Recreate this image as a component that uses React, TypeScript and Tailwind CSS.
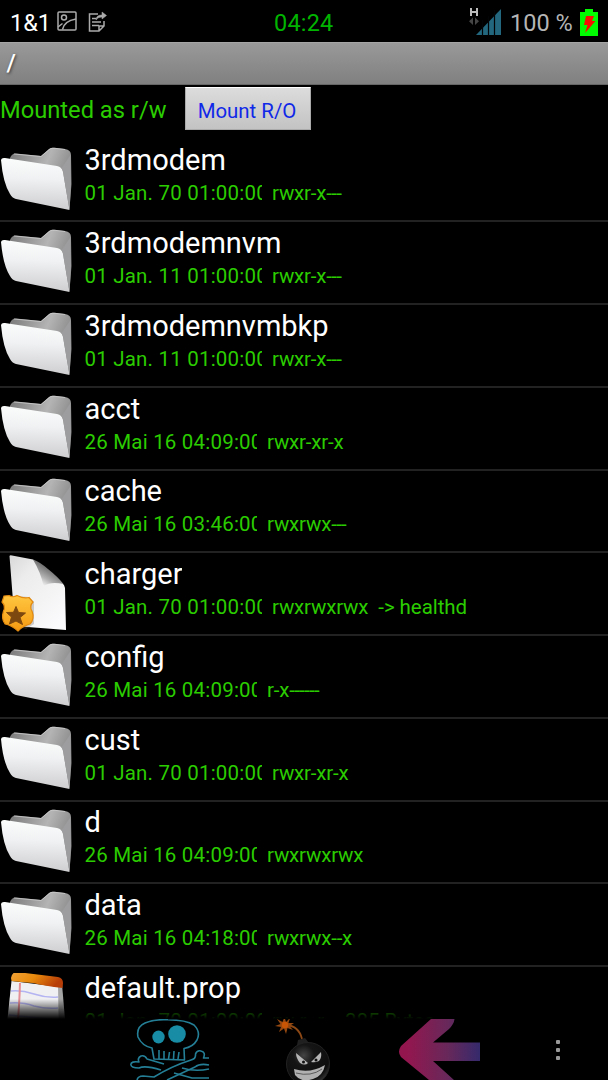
import type { ReactNode } from "react";

type Kind = "folder" | "link" | "text";

interface Entry {
  name: string;
  date: string;
  perms: string;
  kind: Kind;
  extra?: string;
}

const entries: Entry[] = [
  { name: "3rdmodem", date: "01 Jan. 70 01:00:00", perms: "rwxr-x---", kind: "folder" },
  { name: "3rdmodemnvm", date: "01 Jan. 11 01:00:00", perms: "rwxr-x---", kind: "folder" },
  { name: "3rdmodemnvmbkp", date: "01 Jan. 11 01:00:00", perms: "rwxr-x---", kind: "folder" },
  { name: "acct", date: "26 Mai 16 04:09:00", perms: "rwxr-xr-x", kind: "folder" },
  { name: "cache", date: "26 Mai 16 03:46:00", perms: "rwxrwx---", kind: "folder" },
  { name: "charger", date: "01 Jan. 70 01:00:00", perms: "rwxrwxrwx", kind: "link", extra: "-> healthd" },
  { name: "config", date: "26 Mai 16 04:09:00", perms: "r-x------", kind: "folder" },
  { name: "cust", date: "01 Jan. 70 01:00:00", perms: "rwxr-xr-x", kind: "folder" },
  { name: "d", date: "26 Mai 16 04:09:00", perms: "rwxrwxrwx", kind: "folder" },
  { name: "data", date: "26 Mai 16 04:18:00", perms: "rwxrwx--x", kind: "folder" },
  { name: "default.prop", date: "01 Jan. 70 01:00:00", perms: "rw-r--r--", kind: "text", extra: "385 Bytes" },
];

/* ---------- icons ---------- */

function FolderIcon() {
  return (
    <svg viewBox="0 0 74 74" className="h-[74px] w-[74px]">
      <defs>
        <linearGradient id="folderBack" x1="0" y1="0" x2="1" y2="0.4">
          <stop offset="0" stopColor="#777" />
          <stop offset="0.6" stopColor="#b4b4b4" />
          <stop offset="1" stopColor="#858585" />
        </linearGradient>
        <linearGradient id="folderFront" x1="0.5" y1="0" x2="0.45" y2="1">
          <stop offset="0" stopColor="#fbfcfc" />
          <stop offset="0.4" stopColor="#f0f1f2" />
          <stop offset="1" stopColor="#cdcdcf" />
        </linearGradient>
      </defs>
      <path d="M10 12Q12 7 16 7.500L41 10L49 3Q51 1.500 54 1.800L65 3Q71 4 71 9L71.500 38L69.500 63L60 55L10 20Z" fill="url(#folderBack)" />
      <path d="M14 8L41 10.500L50 3Q52 2 55 2.300L65 3.500" fill="none" stroke="#ccc" strokeWidth="0.800" />
      <path d="M1 14Q1.500 11.500 5 12L57 20Q62 21 63 26L69.500 64L16 53Q12 52 10 48Q3 37 1 14Z" fill="url(#folderFront)" />
      <path d="M61.500 22Q63.500 25 63.700 30L69.500 64L71 38L70.500 9" fill="#9d9d9f" />
    </svg>
  );
}

function LinkFileIcon() {
  return (
    <svg viewBox="0 0 74 80" className="h-20 w-[74px]">
      <defs>
        <linearGradient id="sheet" x1="0" y1="0" x2="0.8" y2="1">
          <stop offset="0" stopColor="#d8d8d8" />
          <stop offset="0.3" stopColor="#ececec" />
          <stop offset="1" stopColor="#fbfbfd" />
        </linearGradient>
        <linearGradient id="sheetFold" gradientUnits="userSpaceOnUse" x1="44" y1="33" x2="54" y2="17">
          <stop offset="0" stopColor="#f4f4f4" />
          <stop offset="0.4" stopColor="#b0b0b0" />
          <stop offset="1" stopColor="#666" />
        </linearGradient>
        <linearGradient id="badge" x1="0" y1="0" x2="0" y2="1">
          <stop offset="0" stopColor="#ffc640" />
          <stop offset="1" stopColor="#f59a12" />
        </linearGradient>
      </defs>
      <path d="M9.500 3Q10 2 12 2.500L33 6.500L62 30Q65 32 65 35L66 77L15 73Q12 35 9.500 3Z" fill="url(#sheet)" />
      <path d="M33 6.500Q41 20 43.500 33Q51 28 63.500 31Q58 24 48 16Q40 9 33 6.500Z" fill="url(#sheetFold)" />
      <path d="M14 43L29 44L34 49L34 71L26 76L15 73Z" fill="#6b6b6b" opacity="0.3" />
      <path
        d="M4 43L9 42.500Q13 45 17 42.500Q24 46 29 44.500L33 49Q29 53 32 58Q35 66 30 71Q23 73 18 78Q11 72 5 71Q1 66 3.500 58Q6 53 2 49Z"
        fill="url(#badge)"
        stroke="#e38a10"
        strokeWidth="1.200"
      />
      <path d="M16 53.500L18.500 59.500L25.500 60L20 64.500L22.500 71.500L16 68L9.500 71L11.500 64L6.500 59.500L13.500 59.300Z" fill="#7d480f" stroke="#7d480f" strokeLinejoin="round" />
    </svg>
  );
}

function TextFileIcon() {
  return (
    <svg viewBox="0 0 74 74" className="h-[74px] w-[74px]">
      <defs>
        <linearGradient id="padTop" x1="0" y1="0" x2="1" y2="0.3">
          <stop offset="0" stopColor="#f0a238" />
          <stop offset="0.5" stopColor="#e88a0c" />
          <stop offset="1" stopColor="#b83e08" />
        </linearGradient>
      </defs>
      <path d="M11.500 8L60 14L66 70L6 60Z" fill="#f0f0f2" />
      <path d="M58 12L62 11L67 70L59 70Z" fill="#a5a5a5" />
      <path d="M11 5Q12 -1 17 -1L58 4Q63 5 63 10L62.500 15Q45 13 33 10Q20 9 11.500 8Z" fill="url(#padTop)" />
      <path d="M11 18Q22 17 34 21Q46 25 58 24M10 30Q23 29 34 33Q46 36 58 35M9 42L59 47" fill="none" stroke="#b4b4f2" strokeWidth="1.600" />
      <path d="M20 10Q19.500 30 17 60" fill="none" stroke="#e58d94" strokeWidth="2" />
    </svg>
  );
}

const icons: Record<Kind, ReactNode> = {
  folder: <FolderIcon />,
  link: <LinkFileIcon />,
  text: <TextFileIcon />,
};

function SkullIcon() {
  return (
    <svg viewBox="0 0 80 61" className="h-[61px] w-20 shrink-0" fill="none" stroke="#247f96" strokeWidth="1.600" strokeLinejoin="round">
      <path d="M24 40L22 29Q12 27 8 18Q6 8 15 4Q25 0 38 0.800Q56 1 64 6Q71 13 67 21Q63 28 54 29.500L54.500 41Z" />
      <path d="M29 31V40M34 32V40M39.500 33L38.500 40M44 32L43.500 40M49 33L48 40" />
      <ellipse cx="28.500" cy="18" rx="6.200" ry="6.500" fill="#188ca4" stroke="none" />
      <circle cx="47" cy="15" r="8.800" fill="#188ca4" stroke="none" />
      {/* bone running down to the right */}
      <path d="M34 45L17 40Q15 36 11 37Q7 39 9 43Q1 42 0.800 45.500Q1 49 9 49Q15 46 31 51" />
      <path d="M52 49Q65 53 79 50M44 54L62 59H79" />
      {/* bone running up to the right */}
      <path d="M7 61Q8 57 13 57L24 58Q42 47 61 41Q66 40 65.500 35Q67 31 71 32Q76 33 73.500 39H79" />
      <path d="M79 46Q70 44 65 48L37 61" />
    </svg>
  );
}

function BombIcon() {
  return (
    <svg viewBox="0 0 60 61" className="h-[61px] w-[60px]">
      <defs>
        <radialGradient id="bombBody" cx="0.4" cy="0.3" r="0.7">
          <stop offset="0" stopColor="#444" />
          <stop offset="0.35" stopColor="#151515" />
          <stop offset="0.85" stopColor="#0e0e0e" />
          <stop offset="1" stopColor="#303030" />
        </radialGradient>
      </defs>
      <path d="M11 6Q24 7 27 20" fill="none" stroke="#8c4815" strokeWidth="1.800" />
      <path d="M9.500 -2L11 3L15 -1L13.500 4L19 4L14.500 7L18 11L12.500 9L11 15L9 9.500L4 13L6 8L0 7L5.500 5L2 0L7.500 3Z" fill="#95480f" />
      <circle cx="10" cy="6" r="3.200" fill="#c85506" />
      <path d="M22 26L23 21L30 19L34 24V30H23Z" fill="#202020" />
      <circle cx="33" cy="45" r="21.500" fill="url(#bombBody)" stroke="#222" />
      <path d="M21 34L33 44Q30 47 25 44Q21 39 21 34ZM46 33Q47 39 44 42Q40 44 36 43Z" fill="#b5b5b5" />
      <circle cx="28.500" cy="43" r="1.500" fill="#111" />
      <circle cx="41" cy="41" r="1.500" fill="#111" />
      <path d="M19 50Q35 55 50 46Q48 57 38 60Q26 64 20 56Z" fill="#b0b0b0" />
      <path d="M21 54Q36 58 47 50" fill="none" stroke="#444" strokeWidth="0.800" />
    </svg>
  );
}

function ArrowIcon() {
  return (
    <svg viewBox="0 0 82 61" className="h-[61px] w-[82px]">
      <defs>
        <linearGradient id="arrow" x1="0" y1="0.45" x2="1" y2="0.45">
          <stop offset="0.1" stopColor="#94164f" />
          <stop offset="0.25" stopColor="#861c52" />
          <stop offset="0.6" stopColor="#68285a" />
          <stop offset="1" stopColor="#352a6c" />
        </linearGradient>
      </defs>
      <path d="M33 0H56.500Q56 5 51 10L35 23.500H82V42H35L56 61H31L3 38Q-1 33 3 27Z" fill="url(#arrow)" />
    </svg>
  );
}

/* ---------- page parts ---------- */

function StatusBar() {
  return (
    <header className="grid h-[42px] shrink-0 grid-cols-[274px_195px_1fr] items-center text-[23.500px] leading-[42px]">
      <div className="flex items-center pl-[10px]">
        <span className="w-[47px] pt-[2px] whitespace-nowrap text-white">1&amp;1</span>
        <svg viewBox="0 0 20 20" className="h-5 w-5 -translate-y-px" fill="none" stroke="#aaa" strokeWidth="1.500">
          <rect x="1" y="1" width="18" height="18" rx="1" />
          <circle cx="7" cy="6.500" r="2.500" />
          <path d="M1 16L5.500 12.500M5.500 18.500Q7 10 19 8" />
        </svg>
        <svg viewBox="0 0 20 21" className="ml-[11px] h-[21px] w-5 -translate-y-px" fill="none" stroke="#aaa" strokeWidth="1.500">
          <path d="M10 3H1.500V20H11L16 15V10M11 20V15H16M4 11H13M4 14.500H11M4 7.500H8" />
          <path d="M8 9Q8 4 14 4V1L18.500 4.500L14 8V6Q10 6 8 9Z" fill="#aaa" strokeWidth="0.500" />
        </svg>
      </div>
      <span className="pt-[2px] tracking-[0.200px] text-[#00b400]">04:24</span>
      <div className="flex h-full items-center text-[#b5b5b5]">
        <svg viewBox="0 0 32 28" className="h-7 w-8">
          <path d="M2 0V8M8 0V8M2 4H8" stroke="#bbb" strokeWidth="2" />
          <path d="M4 9.500V17L0 13.200ZM6 9.500V17L10 13.200Z" fill="#454545" />
          <path d="M7 27L32 1V27Z" fill="#22677e" />
          <path d="M13.500 12V28M19.500 8V28M25.500 2V28" stroke="#020406" strokeWidth="1.200" />
        </svg>
        <span className="ml-[9px] w-[70px] pt-[2px] whitespace-nowrap">100 %</span>
        <svg viewBox="0 0 18 27" className="h-[27px] w-[18px]">
          <path d="M0 3H5V0H13V3H18V27H0Z" fill="#00fc00" />
          <path d="M6 7H14L12 12H15.500L5 24L7.500 16H4Z" fill="#f80d00" />
        </svg>
      </div>
    </header>
  );
}

// trailing dashes run together into one line
function Perms({ value }: { value: string }) {
  const body = value.replace(/-{3,}$/, "");

  return (
    <span className="ml-[10.500px] tracking-[-0.200px]">
      {body}
      <span className="tracking-[-0.700px]">{value.slice(body.length)}</span>
    </span>
  );
}

function Row({ entry }: { entry: Entry }) {
  const german = entry.date.startsWith("26");

  return (
    <li className="flex h-[82.750px] shrink-0 border-b-2 border-[#222]">
      <div className={`w-[84.500px] shrink-0 ${entry.kind === "link" ? "pt-0" : "pt-[6px]"}`}>{icons[entry.kind]}</div>
      <div className="whitespace-nowrap">
        <div className="pt-[1.700px] text-[29px] leading-[38px] text-white">
          <span className="inline-block max-w-[243px] overflow-hidden align-top">{entry.name}</span>
        </div>
        <div className="flex text-[20.500px] leading-[28px] text-[#2bcd00]">
          <span className={`shrink-0 overflow-hidden tracking-[0.200px] ${german ? "w-[172px]" : "w-[177px]"}`}>{entry.date}</span>
          <Perms value={entry.perms} />
          {entry.extra && <span className="ml-[10px] tracking-[-0.050px]">{entry.extra}</span>}
        </div>
      </div>
    </li>
  );
}

export default function App() {
  return (
    <div className="flex h-[1080px] w-[608px] flex-col overflow-hidden bg-black font-['Roboto',sans-serif]">
      <StatusBar />

      <div className="h-[43px] shrink-0 border-t border-b border-t-[#a5a5a5] border-b-[#666] bg-gradient-to-b from-[#999] to-[#808080] pl-[6.500px] text-[24px] leading-[41px] font-medium text-white [text-shadow:1px_1px_3px_#333]">
        /
      </div>

      <div className="flex h-[54.600px] shrink-0 items-start">
        <span className="w-[185px] pt-[8px] text-[23.700px] leading-[34px] whitespace-nowrap text-[#2bcd00]">Mounted as r/w</span>
        <button className="mt-[2px] h-[43px] w-[126px] border border-[#aaa] border-t-white bg-gradient-to-b from-[#dcdcdc] to-[#c3c3c3] pt-[5px] pr-[2px] text-[20.400px] leading-none text-[#1028e8]">
          Mount R/O
        </button>
      </div>

      <main className="relative h-[879.400px] shrink-0 overflow-hidden">
        <ul className="flex flex-col">
          {entries.map((entry) => (
            <Row key={entry.name} entry={entry} />
          ))}
        </ul>
        <div className="absolute inset-x-0 bottom-0 h-[20px] bg-gradient-to-b from-transparent to-black" />
      </main>

      <nav className="flex h-[61px] shrink-0 pl-[130px]">
        <SkullIcon />
        <div className="ml-[65px]"><BombIcon /></div>
        <div className="ml-[63px]"><ArrowIcon /></div>
        <div className="ml-[76px] flex flex-col gap-[4px] pt-[21px]">
          <i className="h-[4px] w-[4px] rounded-[1px] bg-[#999]" />
          <i className="h-[4px] w-[4px] rounded-[1px] bg-[#999]" />
          <i className="h-[4px] w-[4px] rounded-[1px] bg-[#999]" />
        </div>
      </nav>
    </div>
  );
}
